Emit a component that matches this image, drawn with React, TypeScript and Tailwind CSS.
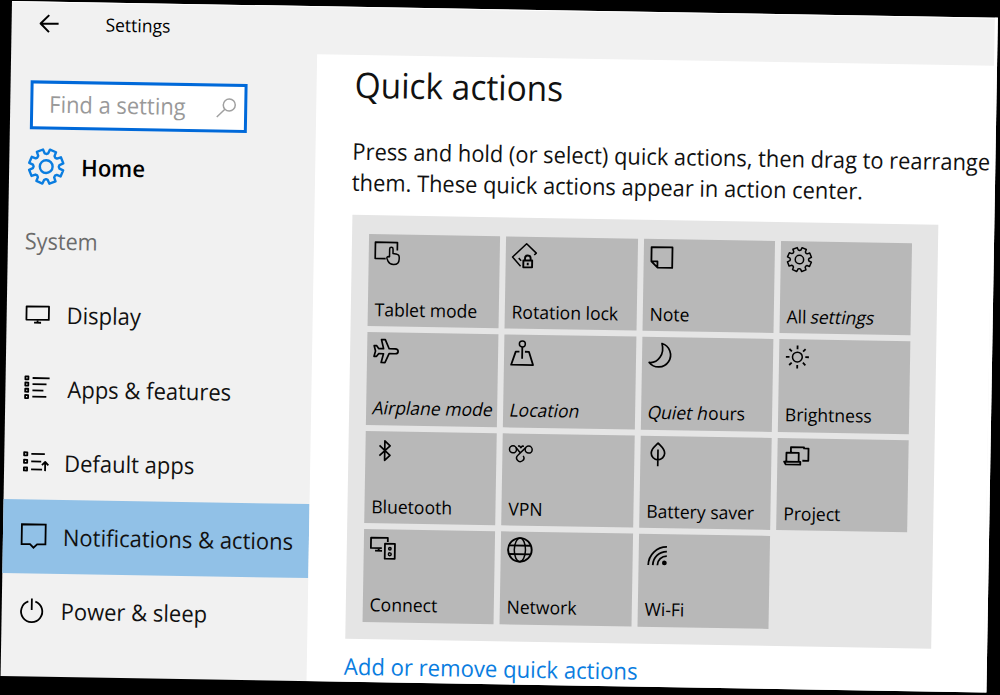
import type { ReactNode } from "react";

function gearPath(cx: number, cy: number, r: number, depth: number) {
  const teeth = 8;
  const points: string[] = [];
  for (let i = 0; i < teeth; i++) {
    const mid = ((i + 0.5) / teeth) * Math.PI * 2;
    const stops: [number, number][] = [
      [-0.26, r - depth],
      [-0.19, r],
      [0.19, r],
      [0.26, r - depth],
      [0.39, r - depth - depth * 0.2],
    ];
    for (const [offset, radius] of stops) {
      const x = cx + Math.cos(mid + offset) * radius;
      const y = cy + Math.sin(mid + offset) * radius;
      points.push(`${x.toFixed(2)} ${y.toFixed(2)}`);
    }
  }
  return `M${points.join("L")}Z`;
}

function Glyph({ size, stroke = 1.5, children }: { size: number; stroke?: number; children: ReactNode }) {
  return (
    <svg
      className="block shrink-0 overflow-visible"
      width={size}
      height={size}
      viewBox={`0 0 ${size} ${size}`}
      fill="none"
      stroke="currentColor"
      strokeWidth={stroke}
      strokeLinejoin="round"
    >
      {children}
    </svg>
  );
}

const tiles: { label: ReactNode; className: string; icon: ReactNode }[] = [
  {
    label: "Tablet mode",
    className: "",
    icon: (
      <>
        <path strokeWidth={1.7} d="M17 24.3H6.5V8H28.5V16" />
        <path d="M20.8 22.5V14.5a1.7 1.7 0 0 1 3.4 0V19l4.2.8q2.1.5 2.1 2.7v1.8c0 3.6-2.3 5.7-5.6 5.7-3 0-4.4-1-5.4-3l-1.3-3.2c-.3-1.6 1.4-2.2 2.6-.8" />
      </>
    ),
  },
  {
    label: "Rotation lock",
    className: "",
    icon: (
      <>
        <path d="M15 29.5L6.8 20.5 20.7 7 30.5 16.2 28.5 18.2M13 21.5l2.5 2.5" />
        <path strokeWidth={1.9} d="M17.7 23.7H26.5V30.5H17.7ZM19.3 23.5V21.5a2.8 2.8 0 0 1 5.6 0v2M22.1 26v2.5" />
      </>
    ),
  },
  {
    label: "Note",
    className: "",
    icon: <path strokeWidth={1.8} d="M7.7 8.2H28.6V28.7H14L7.7 22.5ZM7.7 22.5H13.8V28.7" />,
  },
  {
    label: (
      <>
        All <span className="inline-block -skew-x-12">settings</span>
      </>
    ),
    className: "",
    icon: (
      <>
        <path d={gearPath(18.7, 18.2, 12.2, 2.6)} />
        <circle cx="18.7" cy="18.2" r="4.2" />
      </>
    ),
  },
  {
    label: "Airplane mode",
    className: "-skew-x-12",
    icon: (
      <path
        strokeWidth={1.7}
        d="M31 18.8c0 1.6-1.4 2.4-3 2.4H22L18 30.2H14.2L16.4 21.4H11.5L9.5 24.1H7L8.4 18.8 7 13.5H9.5L11.5 16.3H16.4L14.2 7.3H18L22 16.3H28c1.6 0 3 .9 3 2.5Z"
      />
    ),
  },
  {
    label: "Location",
    className: "-skew-x-12",
    icon: (
      <>
        <circle cx="18.1" cy="9.2" r="3" />
        <path d="M18.1 12.2V24M15.3 17H11.6L7.2 30.2H29.1L24.8 17H20.8" strokeWidth={1.8} />
      </>
    ),
  },
  {
    label: (
      <>
        <span className="inline-block -skew-x-12">Quiet h</span>ours
      </>
    ),
    className: "",
    icon: <path strokeWidth={1.7} d="M19.7 6.4A12 12 0 1 1 7.2 25.6C16 26.5 22.8 17 19.7 6.4Z" />,
  },
  {
    label: "Brightness",
    className: "",
    icon: (
      <>
        <circle cx="18.3" cy="17.7" r="4.9" />
        <path
          strokeWidth={1.8}
          d="M18.3 6.2v3.6M18.3 25.6v3.6M6.8 17.7h3.6M26.2 17.7h3.6M10.2 9.6l2.5 2.5M23.9 23.3l2.5 2.5M26.4 9.6l-2.5 2.5M12.7 23.3l-2.5 2.5"
        />
      </>
    ),
  },
  {
    label: "Bluetooth",
    className: "",
    icon: <path strokeWidth={1.7} d="M14 14L24.6 23.9 19.3 28.9V9.5L24.6 14.5 14 24.4" />,
  },
  {
    label: "VPN",
    className: "",
    icon: (
      <>
        <circle cx="10.5" cy="15.8" r="3.5" />
        <circle cx="26.2" cy="15.8" r="3.5" />
        <path d="M13.2 13.6L18 19.4M23.5 13.6L15.5 21.6A3.6 3.6 0 1 0 20.8 22.1M15.4 12.4h1.6l1.4 1.6 1.4-1.6h1.6" />
      </>
    ),
  },
  {
    label: "Battery saver",
    className: "",
    icon: (
      <path
        strokeWidth={1.7}
        d="M17.5 7.1C14.8 10.1 10.8 12.5 10.8 17.1a6.7 6.7 0 0 0 13.4 0C24.2 12.5 20.2 10.1 17.5 7.1ZM17.5 13.5V30.2"
      />
    ),
  },
  {
    label: "Project",
    className: "",
    icon: (
      <path strokeWidth={1.8} d="M9 22.8V14.5H21.3V22.8M6.8 23.4H23V26.3H8.5ZM13.4 14.5V8.9H26.5V10H31V22.3H25" />
    ),
  },
  {
    label: "Connect",
    className: "",
    icon: (
      <>
        <path strokeWidth={1.8} d="M18 18.8H7.1V8.5H23.9V12.5M14.9 18.8V21.4M11.3 21.5H18.3M21.1 14.3H31.1V29.3H21.1Z" />
        <circle cx="26.1" cy="19.3" r="1.2" />
        <circle cx="26.1" cy="24.8" r="1.4" />
      </>
    ),
  },
  {
    label: "Network",
    className: "",
    icon: (
      <>
        <circle cx="19.1" cy="18.2" r="11.8" strokeWidth={1.9} />
        <ellipse cx="19.1" cy="18.2" rx="5.6" ry="11.8" />
        <path d="M8.2 13.9H30M8.2 22.5H30" strokeWidth={1.8} />
      </>
    ),
  },
  {
    label: "Wi-Fi",
    className: "",
    icon: (
      <>
        <path
          strokeWidth={1.8}
          d="M9.7 31.2A18.5 18.5 0 0 1 28.1 12.8M14.2 31.2A14 14 0 0 1 28.1 17.4M18.8 31.2A9.4 9.4 0 0 1 28.1 21.9"
        />
        <circle cx="25.8" cy="28.8" r="2.4" fill="currentColor" stroke="none" />
      </>
    ),
  },
];

const navItems: { label: string; active?: boolean; indent: string; icon: ReactNode }[] = [
  {
    label: "Display",
    indent: "pl-[18.5px] gap-[17.5px]",
    icon: <path d="M.8 4H23.2V17.3H.8ZM12 17.3V20M8.5 20.2H15.5" />,
  },
  {
    label: "Apps & features",
    indent: "pl-[18.5px] gap-[19px]",
    icon: (
      <path d="M.8 0H3.8V3H.8ZM.8 6.2H3.8V9.2H.8ZM.8 12.4H3.8V15.4H.8ZM.8 18.7H3.8V21.7H.8ZM8 1.6H25M8 7.8H22M8 14H19M8 20.2H22" />
    ),
  },
  {
    label: "Default apps",
    indent: "pl-[18.5px] gap-[17px]",
    icon: (
      <path d="M.8 2H4V5H.8ZM.8 9.5H4V12.5H.8ZM.8 17.2H4V20.2H.8ZM8 3.5H21.5M8 11H18M8 19H19M22 20.5V11.5M18.8 14.6L22 11.3 25.2 14.6" />
    ),
  },
  {
    label: "Notifications & actions",
    active: true,
    indent: "pl-[18px] gap-[17.5px]",
    icon: <path strokeLinejoin="miter" d="M.8 0H24.6V19.8H16.3L12.7 23.3 9.2 19.8H.8Z" />,
  },
  {
    label: "Power & sleep",
    indent: "pl-[18px] gap-[17px]",
    icon: <path d="M8.5 3.1A10.6 10.6 0 1 0 15.5 3.1M12 0V11.5" />,
  },
];

function Sidebar() {
  return (
    <aside className="flex w-[305.5px] shrink-0 flex-col">
      <div className="ml-[19.5px] mt-[31px] flex h-[49px] w-[217px] items-center justify-between border-[3px] border-[#0069d9] bg-white pl-4 pr-2">
        <span className="w-[150px] origin-left scale-x-[0.952] whitespace-nowrap pb-0.5 text-[23px] leading-none text-[#999999]">
          Find a setting
        </span>
        <span className="text-[#a0a0a0]">
          <Glyph size={20}>
            <circle cx="13" cy="6.3" r="6" />
            <path d="M8.7 10.7L.7 18.5" />
          </Glyph>
        </span>
      </div>
      <div className="mt-[18px] flex h-[37px] items-center pl-[19px] text-[#0a7de0]">
        <Glyph size={36} stroke={2.4}>
          <path d={gearPath(18, 18, 17.4, 4)} />
          <circle cx="18" cy="18" r="6.4" />
        </Glyph>
        <span className="ml-[17px] origin-left scale-x-[0.96] pt-0.5 text-[23px] font-semibold leading-none text-black">
          Home
        </span>
      </div>
      <div className="mt-[38px] flex h-9 origin-left scale-x-[0.94] items-center pl-[18px] text-[23px] leading-none text-[#6b6b6b]">
        System
      </div>
      <nav className="mt-[18.5px] flex flex-col">
        {navItems.map((item) => (
          <div
            key={item.label}
            className={`flex h-[74px] items-center ${item.indent} ${item.active ? "bg-[#91c1e7]" : ""}`}
          >
            <Glyph size={24} stroke={1.8}>
              {item.icon}
            </Glyph>
            <span className="origin-left scale-x-[0.956] whitespace-nowrap pt-[2px] text-[23px] leading-none text-[#111]">
              {item.label}
            </span>
          </div>
        ))}
      </nav>
    </aside>
  );
}

function QuickActions() {
  return (
    <main className="flex min-w-0 flex-1 flex-col bg-white pl-[38px]">
      <h1 className="mt-[5.5px] flex h-[48px] w-[240px] origin-left scale-x-[0.955] items-center whitespace-nowrap text-[35px] font-normal leading-none text-[#111]">
        Quick actions
      </h1>
      <p className="-ml-px mt-[27.5px] h-[62px] w-[677px] origin-left scale-x-[0.95] whitespace-nowrap text-[23px] leading-[31px] text-[#111]">
        Press and hold (or select) quick actions, then drag to rearrange
        <br />
        them. These quick actions appear in action center.
      </p>
      <div className="mt-[17px] grid h-[424px] w-[586.5px] shrink-0 grid-cols-[repeat(4,131.3px)] grid-rows-[repeat(4,92.4px)] gap-x-[6px] gap-y-[6.2px] bg-[#e5e5e5] pl-[17.7px] pt-[18.7px]">
        {tiles.map((tile, index) => (
          <div key={index} className="flex flex-col justify-between bg-[#b8b8b8] pb-[5.5px] text-black">
            <Glyph size={36}>{tile.icon}</Glyph>
            <div className="origin-left scale-x-[0.975] pl-[7px]">
              <div className={`whitespace-nowrap text-[18px] leading-[24px] ${tile.className}`}>{tile.label}</div>
            </div>
          </div>
        ))}
      </div>
      <a className="-ml-px mt-[11.5px] origin-left scale-x-[0.962] self-start whitespace-nowrap text-[23px] leading-[31px] text-[#0a7de0]">
        Add or remove quick actions
      </a>
    </main>
  );
}

export default function App() {
  return (
    <div className="h-[695px] w-[1000px] overflow-hidden bg-black font-['Open_Sans','Noto_Sans',sans-serif]">
      <div className="ml-[12px] flex h-[675px] w-[986px] origin-top-left translate-y-px rotate-[0.97deg] flex-col border-r-[3px] border-t border-white bg-[#f1f1f1]">
        <header className="flex h-[47px] shrink-0 items-center pb-[4.5px] pl-[28px]">
          <Glyph size={20} stroke={2}>
            <path d="M19 10H1M9.5 1.5L1 10 9.5 18.5" />
          </Glyph>
          <span className="ml-[45.5px] origin-left scale-x-[0.97] text-[18px] leading-none text-black">Settings</span>
        </header>
        <div className="flex min-h-0 flex-1">
          <Sidebar />
          <QuickActions />
        </div>
      </div>
    </div>
  );
}
